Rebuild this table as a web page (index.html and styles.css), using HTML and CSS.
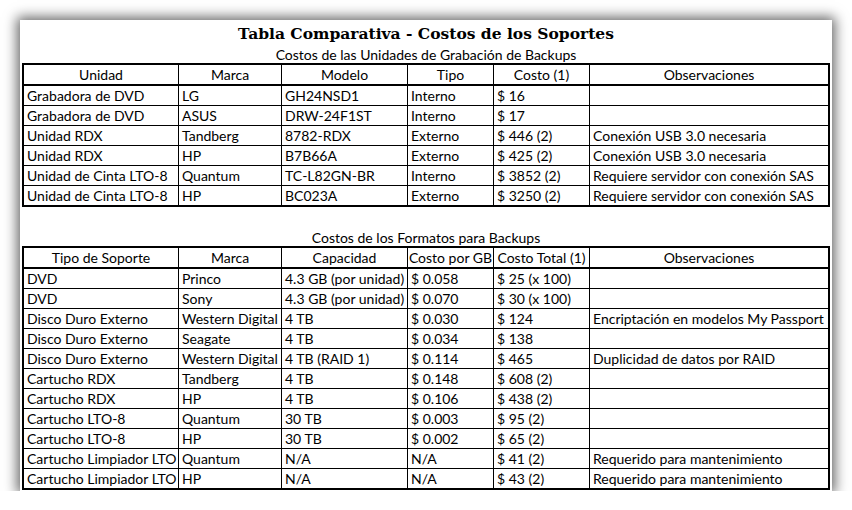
FILE: index.html
```html
<!DOCTYPE html>
<html lang="es">
<head>
<meta charset="utf-8">
<title>Tabla Comparativa - Costos de los Soportes</title>
<link rel="stylesheet" href="styles.css">
</head>
<body>
<div class="page">
  <h1 class="title">Tabla Comparativa - Costos de los Soportes</h1>
  <p class="caption">Costos de las Unidades de Grabación de Backups</p>
  <div class="sheet">
    <div class="cell head">Unidad</div>
    <div class="cell head">Marca</div>
    <div class="cell head">Modelo</div>
    <div class="cell head">Tipo</div>
    <div class="cell head">Costo (1)</div>
    <div class="cell head">Observaciones</div>

    <div class="cell">Grabadora de DVD</div>
    <div class="cell">LG</div>
    <div class="cell">GH24NSD1</div>
    <div class="cell">Interno</div>
    <div class="cell">$ 16</div>
    <div class="cell"></div>

    <div class="cell">Grabadora de DVD</div>
    <div class="cell">ASUS</div>
    <div class="cell">DRW-24F1ST</div>
    <div class="cell">Interno</div>
    <div class="cell">$ 17</div>
    <div class="cell"></div>

    <div class="cell">Unidad RDX</div>
    <div class="cell">Tandberg</div>
    <div class="cell">8782-RDX</div>
    <div class="cell">Externo</div>
    <div class="cell">$ 446 (2)</div>
    <div class="cell">Conexión USB 3.0 necesaria</div>

    <div class="cell">Unidad RDX</div>
    <div class="cell">HP</div>
    <div class="cell">B7B66A</div>
    <div class="cell">Externo</div>
    <div class="cell">$ 425 (2)</div>
    <div class="cell">Conexión USB 3.0 necesaria</div>

    <div class="cell">Unidad de Cinta LTO-8</div>
    <div class="cell">Quantum</div>
    <div class="cell">TC-L82GN-BR</div>
    <div class="cell">Interno</div>
    <div class="cell">$ 3852 (2)</div>
    <div class="cell">Requiere servidor con conexión SAS</div>

    <div class="cell">Unidad de Cinta LTO-8</div>
    <div class="cell">HP</div>
    <div class="cell">BC023A</div>
    <div class="cell">Externo</div>
    <div class="cell">$ 3250 (2)</div>
    <div class="cell">Requiere servidor con conexión SAS</div>
  </div>

  <p class="caption caption-second">Costos de los Formatos para Backups</p>
  <div class="sheet">
    <div class="cell head">Tipo de Soporte</div>
    <div class="cell head">Marca</div>
    <div class="cell head">Capacidad</div>
    <div class="cell head">Costo por GB</div>
    <div class="cell head">Costo Total (1)</div>
    <div class="cell head">Observaciones</div>

    <div class="cell">DVD</div>
    <div class="cell">Princo</div>
    <div class="cell">4.3 GB (por unidad)</div>
    <div class="cell">$ 0.058</div>
    <div class="cell">$ 25 (x 100)</div>
    <div class="cell"></div>

    <div class="cell">DVD</div>
    <div class="cell">Sony</div>
    <div class="cell">4.3 GB (por unidad)</div>
    <div class="cell">$ 0.070</div>
    <div class="cell">$ 30 (x 100)</div>
    <div class="cell"></div>

    <div class="cell">Disco Duro Externo</div>
    <div class="cell">Western Digital</div>
    <div class="cell">4 TB</div>
    <div class="cell">$ 0.030</div>
    <div class="cell">$ 124</div>
    <div class="cell">Encriptación en modelos My Passport</div>

    <div class="cell">Disco Duro Externo</div>
    <div class="cell">Seagate</div>
    <div class="cell">4 TB</div>
    <div class="cell">$ 0.034</div>
    <div class="cell">$ 138</div>
    <div class="cell"></div>

    <div class="cell">Disco Duro Externo</div>
    <div class="cell">Western Digital</div>
    <div class="cell">4 TB (RAID 1)</div>
    <div class="cell">$ 0.114</div>
    <div class="cell">$ 465</div>
    <div class="cell">Duplicidad de datos por RAID</div>

    <div class="cell">Cartucho RDX</div>
    <div class="cell">Tandberg</div>
    <div class="cell">4 TB</div>
    <div class="cell">$ 0.148</div>
    <div class="cell">$ 608 (2)</div>
    <div class="cell"></div>

    <div class="cell">Cartucho RDX</div>
    <div class="cell">HP</div>
    <div class="cell">4 TB</div>
    <div class="cell">$ 0.106</div>
    <div class="cell">$ 438 (2)</div>
    <div class="cell"></div>

    <div class="cell">Cartucho LTO-8</div>
    <div class="cell">Quantum</div>
    <div class="cell">30 TB</div>
    <div class="cell">$ 0.003</div>
    <div class="cell">$ 95 (2)</div>
    <div class="cell"></div>

    <div class="cell">Cartucho LTO-8</div>
    <div class="cell">HP</div>
    <div class="cell">30 TB</div>
    <div class="cell">$ 0.002</div>
    <div class="cell">$ 65 (2)</div>
    <div class="cell"></div>

    <div class="cell">Cartucho Limpiador LTO</div>
    <div class="cell">Quantum</div>
    <div class="cell">N/A</div>
    <div class="cell">N/A</div>
    <div class="cell">$ 41 (2)</div>
    <div class="cell">Requerido para mantenimiento</div>

    <div class="cell">Cartucho Limpiador LTO</div>
    <div class="cell">HP</div>
    <div class="cell">N/A</div>
    <div class="cell">N/A</div>
    <div class="cell">$ 43 (2)</div>
    <div class="cell">Requerido para mantenimiento</div>
  </div>
</div>
</body>
</html>
```

FILE: styles.css
```css
html, body {
  margin: 0;
  padding: 0;
  background: #ffffff;
}

body {
  font-family: "Lato", "Open Sans", sans-serif;
  color: #000000;
}

.page {
  margin: 20px 0 0 20px;
  width: 812px;
  height: 471px;
  box-sizing: border-box;
  padding: 0 2px;
  background: #ffffff;
  box-shadow: 0 0 12px 3px rgba(0, 0, 0, 0.6);
}

.title {
  margin: 0;
  height: 26px;
  line-height: 27px;
  text-align: center;
  font-family: "DejaVu Serif", "Liberation Serif", serif;
  font-weight: bold;
  font-size: 15.5px;
}

.caption {
  margin: 0;
  height: 17px;
  line-height: 17px;
  text-align: center;
  font-size: 14px;
}

.caption-second {
  margin-top: 22px;
}

.sheet {
  display: grid;
  grid-template-columns: 154px 102px 125px 85px 95px 238px;
  grid-template-rows: 20px;
  grid-auto-rows: 19px;
  gap: 1px;
  width: 808px;
  box-sizing: border-box;
  border: 2px solid #000000;
  background: #000000;
}

.cell {
  background: #ffffff;
  font-size: 14px;
  line-height: 20px;
  padding: 0 0 0 3px;
  white-space: nowrap;
  overflow: hidden;
}

.head {
  box-sizing: border-box;
  height: 20px;
  line-height: 19px;
  border-bottom: 1px solid #000000;
  text-align: center;
  padding: 0;
}
```
